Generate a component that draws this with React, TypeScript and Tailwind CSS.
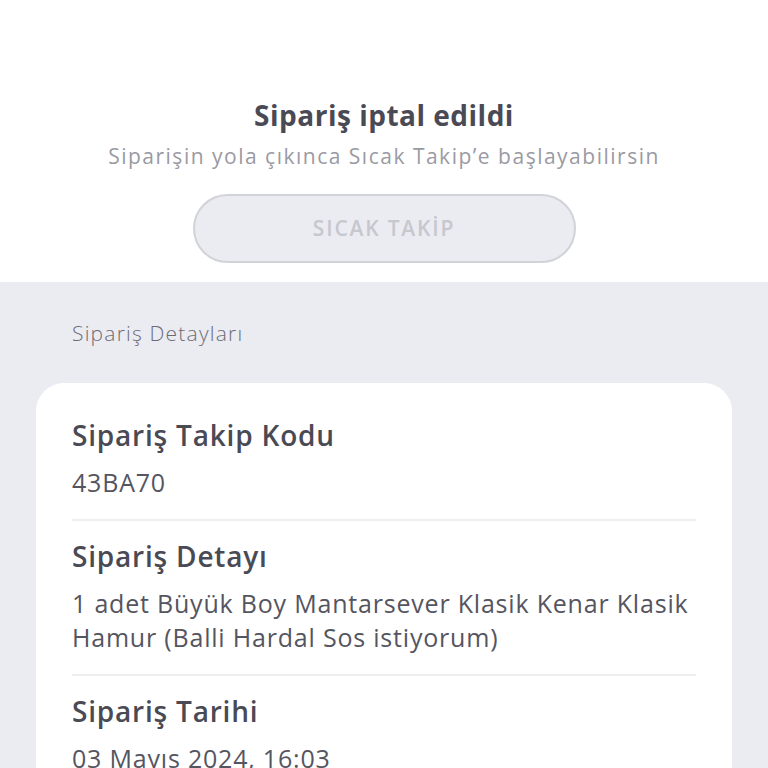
import React from "react";

const rows = [
  { title: "Sipariş Takip Kodu", value: "43BA70" },
  {
    title: "Sipariş Detayı",
    value: "1 adet Büyük Boy Mantarsever Klasik Kenar Klasik Hamur (Balli Hardal Sos istiyorum)",
  },
  { title: "Sipariş Tarihi", value: "03 Mayıs 2024, 16:03" },
];

export default function App() {
  return (
    <div
      className="w-[768px] h-[768px] overflow-hidden bg-[#ebebf2]"
      style={{ fontFamily: "'Open Sans', Lato, sans-serif" }}
    >
      {/* üst kısım */}
      <div className="bg-white h-[282px] flex flex-col items-center pt-[96px]">
        <h1 className="text-[28px] leading-[38px] font-bold tracking-[0.5px] text-[#4a4a55]">
          Sipariş iptal edildi
        </h1>
        <p className="mt-[8px] text-[21px] leading-[28px] tracking-[1.5px] text-[#9a9aa3]">
          Siparişin yola çıkınca Sıcak Takip’e başlayabilirsin
        </p>
        <button
          disabled
          className="mt-[24px] w-[383px] h-[69px] rounded-full border-2 border-[#d2d2d9] bg-[#ebebf2] text-[21px] font-semibold tracking-[1.8px] text-[#c7c7ce]"
        >
          SICAK TAKİP
        </button>
      </div>

      {/* detaylar */}
      <div className="px-[36px]">
        <div className="pt-[38px] pb-[37px] pl-[36px] text-[21px] leading-[26px] font-light tracking-[1.2px] text-[#6b6b75]">
          Sipariş Detayları
        </div>
        <div className="bg-white rounded-[28px] px-[36px] pt-[33px] pb-[24px]">
          {rows.map((r, i) => (
            <div
              key={i}
              className={`pb-[20px] ${i > 0 ? "pt-[16px] border-t-2 border-[#eeeef1]" : ""}`}
            >
              <div className="text-[28px] leading-[38px] font-semibold tracking-[0.8px] text-[#4a4a55]">
                {r.title}
              </div>
              <div className="mt-[11px] text-[25px] leading-[34px] tracking-[0.8px] text-[#55555f]">
                {r.value}
              </div>
            </div>
          ))}
        </div>
      </div>
    </div>
  );
}
